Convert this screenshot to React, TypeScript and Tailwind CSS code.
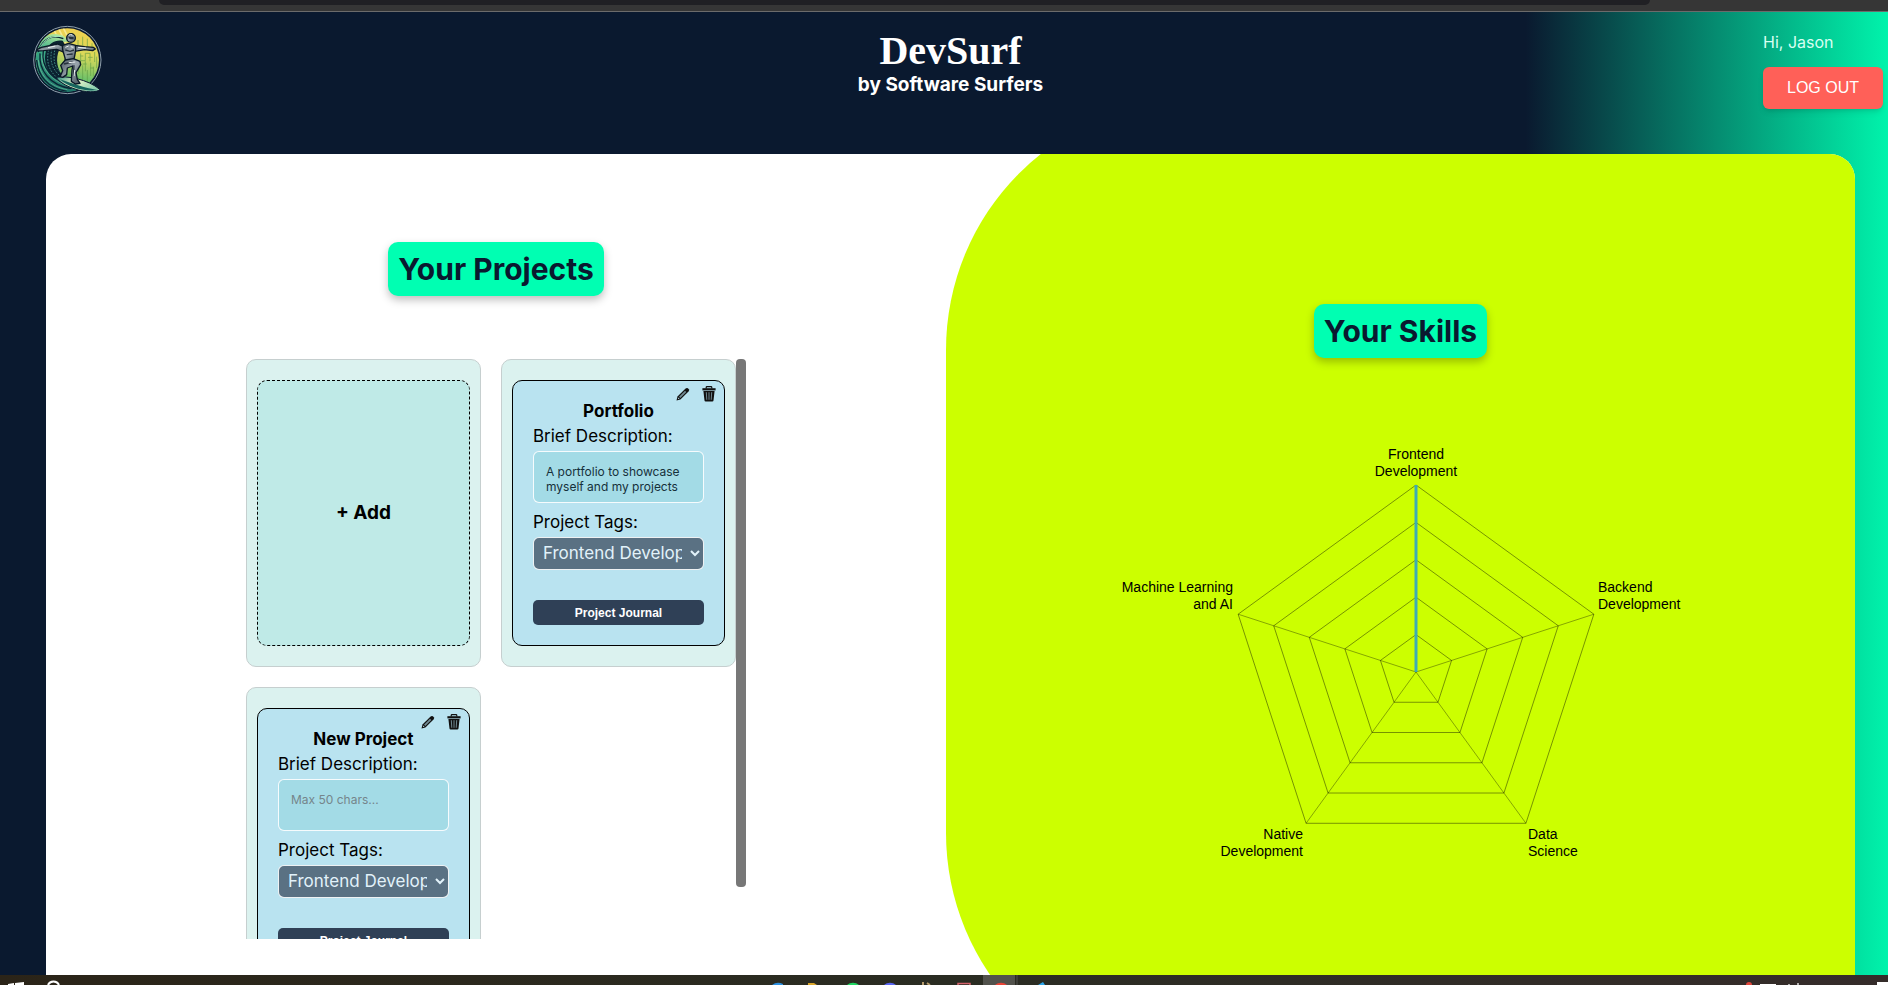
import React, { useId } from "react";

const SKILLS = [
  "Frontend Development",
  "Backend Development",
  "Data Science",
  "Native Development",
  "Machine Learning and AI",
];

type Project = { id: number; title: string; description: string };

const PROJECTS: Project[] = [
  { id: 1, title: "Portfolio", description: "A portfolio to showcase myself and my projects" },
  { id: 2, title: "New Project", description: "" },
];

function SurferLogo() {
  return (
    <svg viewBox="0 0 240 240" className="ml-2.5 size-20" role="img" aria-label="Software Surfers logo">
      <defs>
        <linearGradient id="sky" x1="0.7" y1="0" x2="0.5" y2="1">
          <stop offset="0" stopColor="#f3cf4e" />
          <stop offset="0.4" stopColor="#d9d95a" />
          <stop offset="0.75" stopColor="#6fc26a" />
          <stop offset="1" stopColor="#1f9a7c" />
        </linearGradient>
        <linearGradient id="wave" x1="0.6" y1="0" x2="0.3" y2="1">
          <stop offset="0" stopColor="#c9f2a0" />
          <stop offset="0.35" stopColor="#3fb08a" />
          <stop offset="1" stopColor="#14655f" />
        </linearGradient>
        <linearGradient id="board" x1="0" y1="0" x2="1" y2="0.4">
          <stop offset="0" stopColor="#2b8f80" />
          <stop offset="0.5" stopColor="#e9f5c8" />
          <stop offset="1" stopColor="#8fd0b0" />
        </linearGradient>
        <linearGradient id="steel" x1="0" y1="0" x2="1" y2="1">
          <stop offset="0" stopColor="#46525c" />
          <stop offset="0.5" stopColor="#9aa5ad" />
          <stop offset="1" stopColor="#414d57" />
        </linearGradient>
        <clipPath id="disc">
          <circle cx="118" cy="120" r="95" />
        </clipPath>
      </defs>
      <circle cx="118" cy="120" r="101" fill="#0a192f" stroke="#8f9fab" strokeWidth="3" />
      <g clipPath="url(#disc)">
        <rect x="20" y="20" width="200" height="200" fill="url(#sky)" />
        <path d="M78 30L110 96M92 26L118 80M106 24L124 60" stroke="#fbf2b0" strokeWidth="5" opacity="0.7" />
        <g stroke="#5f9a45" strokeWidth="2.5" fill="none" opacity="0.75">
          <path d="M150 60v20M164 50v26M178 56v22M192 70v16M158 100v22h14v-22h14v24M172 124v30M188 128v40M200 96v30M152 128v34M164 136v44M178 150v40M196 140v30M206 110v34M150 170v20" />
          <path d="M156 108h10M180 112h14M164 132h12M186 144h12" />
        </g>
        <path d="M18 150C16 70 50 34 96 44C112 48 120 58 120 66C96 62 84 76 78 96C72 140 92 178 150 190L190 214L120 224C60 222 20 196 18 150Z" fill="url(#wave)" />
        <path d="M104 62C82 58 62 70 54 92C44 128 60 168 96 182L116 178C92 162 82 128 90 100C94 86 102 78 112 76Z" fill="#0b2230" />
        <g fill="none" stroke="#0a2233" strokeWidth="4">
          <path d="M30 96C44 56 72 42 106 56" />
          <path d="M26 120C30 168 60 206 116 214" />
          <path d="M36 100C32 150 64 196 130 206" />
          <path d="M46 92C38 140 70 186 150 202" />
        </g>
        <g fill="none" stroke="#a8ecc0" strokeWidth="3">
          <path d="M34 88C50 54 74 46 100 50" />
          <path d="M31 120C34 164 64 200 118 209" opacity="0.4" />
          <path d="M41 106C42 150 72 188 136 202" opacity="0.35" />
        </g>
        <g fill="none" stroke="#3f8580" strokeWidth="3" strokeDasharray="5 4">
          <path d="M62 90C54 122 62 150 84 170" />
          <path d="M72 86C64 120 72 146 94 166" />
          <path d="M82 82C74 116 78 142 98 156" />
        </g>
      </g>
      <path d="M84 172C116 166 180 178 215 208C212 218 170 218 138 206C112 197 94 186 84 172Z" fill="url(#board)" stroke="#0a192f" strokeWidth="3" />
      <path d="M96 178C130 190 170 204 208 210C170 216 120 202 96 178Z" fill="#17665f" />
      <g stroke="#0a1826" strokeWidth="4" strokeLinejoin="round" fill="url(#steel)">
        <path d="M108 80L88 72L40 82L28 88L30 93L46 92L86 88L106 96Z" />
        <path d="M140 76L170 80L196 82L202 87L194 92L170 89L140 94Z" />
        <path d="M104 76L122 70L142 76C146 92 140 104 138 118L112 122C112 106 100 92 104 76Z" />
        <path d="M112 120L136 116L156 124L158 134L144 158L148 178L156 190L142 192L130 184L132 150L134 138L118 144L116 164L104 172L96 170L104 152L98 136Z" />
        <circle cx="129" cy="54" r="13" />
      </g>
      <path d="M121 50h16v8h-12z" fill="#27323b" />
      <path d="M112 90l14 4 12-4M116 104l18-2M108 132l26-6M138 136l-2 32" stroke="#26323c" strokeWidth="4" fill="none" />
      <path d="M112 82l10-4M128 80l8 2M122 46q6-5 11-1M122 128l20-2M140 150l-2 18M60 83l22-5M150 82l24 2" stroke="#eef3f5" strokeWidth="3" fill="none" />
    </svg>
  );
}

function PencilIcon() {
  return (
    <svg viewBox="0 0 14 14" className="size-3.5" aria-hidden="true">
      <path d="M0.500 13.500L1.500 9.600L9.600 1.500Q10.800 0.400 11.900 1.300L12.800 2.200Q13.600 3.300 12.500 4.500L4.400 12.500Z" fill="#111" />
      <path d="M3 9.800L9 3.800L10.300 5.100L4.300 11.100Z" fill="#718b94" />
      <path d="M1.900 12.100L2.400 10.500L3.600 11.700Z" fill="#b9e3f0" />
    </svg>
  );
}

function TrashIcon() {
  return (
    <svg viewBox="0 0 14 16" className="h-4 w-3.5" aria-hidden="true">
      <path d="M4.2 2.4V1.4Q4.2 0.6 5 0.6H9Q9.8 0.6 9.8 1.4V2.4" fill="none" stroke="#111" strokeWidth="1.2" />
      <path d="M0.4 2.2H13.6V4.4H0.4Z" fill="#111" />
      <path d="M1.4 5H12.6L11.5 14.4Q11.4 15.5 10.3 15.5H3.7Q2.6 15.5 2.5 14.4Z" fill="#111" />
      <path d="M4.3 6.2L4.8 13.8M7 6.2V13.8M9.7 6.2L9.2 13.8" stroke="#6f8790" strokeWidth="1" />
    </svg>
  );
}

function Header() {
  return (
    <header className="grid h-[142px] shrink-0 grid-cols-[1fr_auto_1fr] items-start pt-2 pr-[5px] pl-[18px]">
      <SurferLogo />
      <div className="pt-[11px] text-center text-white">
        <h1 className="font-['Liberation_Serif',serif] text-[40px] leading-10 font-bold">DevSurf</h1>
        <p className="text-[19px] leading-7 font-bold">by Software Surfers</p>
      </div>
      <div className="flex w-[120px] flex-col gap-[13px] justify-self-end pt-2.5">
        <span className="text-base leading-6 text-[#d8fff2]">Hi, Jason</span>
        <button
          type="button"
          className="h-[42px] rounded-md bg-[#ff6058] font-['Liberation_Sans',sans-serif] text-base text-white shadow-md"
        >
          LOG OUT
        </button>
      </div>
    </header>
  );
}

function SectionTitle({ children }: { children: React.ReactNode }) {
  return (
    <h2 className="rounded-[10px] bg-[#00ffb2] px-2.5 text-3xl leading-[54px] font-bold text-[#0a192f] shadow-[0_4px_8px_rgba(0,0,0,0.25)]">
      {children}
    </h2>
  );
}

function ProjectCard({ project }: { project: Project }) {
  const id = useId();
  return (
    <article className="rounded-[10px] border border-[#c6cfcf] bg-[#dbf2ef] px-2.5 py-5">
      <div className="relative flex h-[266px] flex-col rounded-[10px] border border-black bg-[#b9e3f0] px-5 pt-5">
        <div className="absolute top-[5px] right-2 flex items-center gap-3">
          <button type="button" aria-label="Edit project">
            <PencilIcon />
          </button>
          <button type="button" aria-label="Delete project">
            <TrashIcon />
          </button>
        </div>
        <h3 className="text-center text-[17px] leading-5 font-bold text-black">{project.title}</h3>
        <label htmlFor={`${id}-description`} className="mt-[3px] text-[17px] leading-6 text-black">
          Brief Description:
        </label>
        <textarea
          id={`${id}-description`}
          defaultValue={project.description}
          placeholder="Max 50 chars..."
          maxLength={50}
          className="mt-[3px] h-[52px] shrink-0 resize-none overflow-hidden rounded-md border border-white/90 bg-[#a3dbe6] px-3 pt-3 text-xs leading-[15px] text-[#16303a] placeholder:text-[#75858b]"
        />
        <label htmlFor={`${id}-tag`} className="mt-[7px] text-[17px] leading-6 text-black">
          Project Tags:
        </label>
        <select
          id={`${id}-tag`}
          defaultValue={SKILLS[0]}
          className="mt-[3px] h-[33px] w-full shrink-0 rounded-md border border-white/90 bg-[#5a7183] px-[5px] pb-0.5 text-[17px] text-[#e2f2fa]"
        >
          {SKILLS.map((skill) => (
            <option key={skill}>{skill}</option>
          ))}
        </select>
        <button
          type="button"
          className="mt-[30px] h-[25px] shrink-0 rounded-[5px] bg-[#2f4056] font-['Liberation_Sans',sans-serif] text-xs font-bold text-white"
        >
          Project Journal
        </button>
      </div>
    </article>
  );
}

function Projects() {
  return (
    <section className="flex flex-col items-center pt-[88px]">
      <SectionTitle>Your Projects</SectionTitle>
      <div className="mt-[63px] flex h-[580px] w-[500px]">
        <div className="grid flex-1 grid-cols-2 content-start gap-5 overflow-y-auto [scrollbar-width:none]">
          <div className="rounded-[10px] border border-[#c6cfcf] bg-[#dbf2ef] px-2.5 py-5">
            <button
              type="button"
              className="h-full w-full rounded-[10px] border border-dashed border-black bg-[#bfeae7] text-[19px] font-bold text-black"
            >
              + Add
            </button>
          </div>
          {PROJECTS.map((project) => (
            <ProjectCard key={project.id} project={project} />
          ))}
        </div>
        <div className="w-2.5" aria-hidden="true">
          <div className="h-[91%] rounded-[4px] bg-[#777777]" />
        </div>
      </div>
    </section>
  );
}

const CENTER = { x: 316, y: 232 };
const RADIUS = 187;

function vertex(index: number, scale: number) {
  const angle = (Math.PI * 2 * index) / 5 - Math.PI / 2;
  return {
    x: CENTER.x + RADIUS * scale * Math.cos(angle),
    y: CENTER.y + RADIUS * scale * Math.sin(angle),
  };
}

const LABELS: { x: number; y: number; anchor: "start" | "middle" | "end"; lines: string[] }[] = [
  { x: 316, y: 19, anchor: "middle", lines: ["Frontend", "Development"] },
  { x: 498, y: 152, anchor: "start", lines: ["Backend", "Development"] },
  { x: 428, y: 399, anchor: "start", lines: ["Data", "Science"] },
  { x: 203, y: 399, anchor: "end", lines: ["Native", "Development"] },
  { x: 133, y: 152, anchor: "end", lines: ["Machine Learning", "and AI"] },
];

function SkillsChart() {
  const spokes = [0, 1, 2, 3, 4];
  return (
    <svg viewBox="0 0 601 440" className="mt-[82px] h-[440px] w-[601px]" role="img" aria-label="Skills chart">
      <g fill="none" stroke="#000" strokeOpacity="0.42" strokeWidth="1">
        {[0.2, 0.4, 0.6, 0.8, 1].map((scale) => (
          <polygon
            key={scale}
            points={spokes
              .map((i) => {
                const p = vertex(i, scale);
                return `${p.x},${p.y}`;
              })
              .join(" ")}
          />
        ))}
        {spokes.map((i) => {
          const p = vertex(i, 1);
          return <line key={i} x1={CENTER.x} y1={CENTER.y} x2={p.x} y2={p.y} strokeOpacity="0.35" />;
        })}
      </g>
      <line x1={CENTER.x} y1={CENTER.y} x2={CENTER.x} y2={CENTER.y - RADIUS} stroke="#3eacb4" strokeWidth="3" />
      <g className="font-['Liberation_Sans',sans-serif] text-sm" fill="#000">
        {LABELS.map((label, i) => (
          <text key={i} x={label.x} y={label.y} textAnchor={label.anchor}>
            <tspan x={label.x}>{label.lines[0]}</tspan>
            <tspan x={label.x} dy="17">
              {label.lines[1]}
            </tspan>
          </text>
        ))}
      </g>
    </svg>
  );
}

function Skills() {
  return (
    <section className="relative flex flex-col items-center pt-[150px] before:absolute before:inset-x-0 before:-top-[54px] before:-bottom-[108px] before:-z-10 before:rounded-l-[250px] before:bg-[#ccff00]">
      <SectionTitle>Your Skills</SectionTitle>
      <SkillsChart />
    </section>
  );
}

function Taskbar() {
  return (
    <footer className="flex h-2.5 shrink-0 items-stretch overflow-hidden bg-linear-to-r from-[#2b2418] via-[#2a2c22] to-[#352c2a]">
      <div className="w-[40.5%]">
        <svg viewBox="0 0 70 10" className="h-2.5 w-[70px]" aria-hidden="true">
          <path d="M8 9L14 8V10H8ZM15 8L24 7V10H15Z" fill="#fff" />
          <path d="M48 10A6 6 0 0 1 59 10" fill="none" stroke="#fff" strokeWidth="2" />
        </svg>
      </div>
      <svg viewBox="0 0 300 10" className="h-2.5 w-[300px]" aria-hidden="true">
        <path d="M7 10Q12 6 18 9V10Z" fill="#2b8fe0" />
        <path d="M43 8H49L52 10H43Z" fill="#d9a52a" />
        <path d="M82 10A9 9 0 0 1 94 10Z" fill="#1ed760" />
        <path d="M119 10A9 9 0 0 1 131 10Z" fill="#5865f2" />
        <path d="M158 7V10M162 8L165 10" stroke="#b59a6a" strokeWidth="2" />
        <path d="M193 10V8.500H205V10" fill="none" stroke="#d4626c" strokeWidth="1.500" />
        <path d="M218 0H250V10H218Z" fill="#52524c" />
        <path d="M251 0H253V10H251Z" fill="#3d3d38" />
        <path d="M230 10A9 9 0 0 1 242 10Z" fill="#ea4335" />
        <path d="M273 10L278 7L280 10Z" fill="#2aa5ea" />
      </svg>
      <svg viewBox="0 0 150 10" className="ml-auto h-2.5 w-[150px]" aria-hidden="true">
        <circle cx="11" cy="10" r="3" fill="#e0453a" />
        <path d="M22 9H38V10H22ZM139 7H150V10H139Z" fill="#fff" />
        <path d="M51 9V10M60 8V10" stroke="#ddd" strokeWidth="1.500" />
      </svg>
    </footer>
  );
}

export default function App() {
  return (
    <div className="flex h-screen flex-col overflow-hidden font-['Inter',sans-serif]">
      <div className="h-3 shrink-0 border-b border-[#6b6b6b] bg-[#363636] pr-[12.6%] pl-[8.4%]">
        <div className="h-[5px] rounded-b-[10px] bg-[#202024]" />
      </div>
      <div className="flex min-h-0 flex-1 flex-col bg-[linear-gradient(to_right,#0a192f_80.8%,#00ffb2_101%)]">
        <Header />
        <main className="isolate mr-[33px] ml-[46px] grid min-h-0 flex-1 grid-cols-[99fr_100fr] overflow-hidden rounded-t-[25px] bg-white">
          <Projects />
          <Skills />
        </main>
      </div>
      <Taskbar />
    </div>
  );
}
